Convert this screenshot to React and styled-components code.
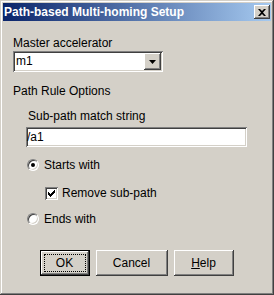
import React from 'react';
import styled, { createGlobalStyle, css } from 'styled-components';

const face = '#d4d0c8';
const shadow = '#808080';
const darkShadow = '#404040';

const GlobalStyle = createGlobalStyle`
  html, body {
    margin: 0;
    padding: 0;
    background: ${face};
  }
  * {
    box-sizing: border-box;
  }
`;

const sunken = css`
  box-shadow:
    inset 1px 1px ${shadow},
    inset -1px -1px #ffffff,
    inset 2px 2px ${darkShadow},
    inset -2px -2px ${face};
`;

const raised = css`
  box-shadow:
    inset -1px -1px ${darkShadow},
    inset 1px 1px #ffffff,
    inset -2px -2px ${shadow};
`;

const Window = styled.div`
  width: 274px;
  height: 295px;
  background: ${face};
  padding: 3px;
  display: flex;
  flex-direction: column;
  font-family: "Liberation Sans", Arial, sans-serif;
  font-size: 12px;
  color: #000000;
  box-shadow:
    inset -1px -1px ${darkShadow},
    inset 1px 1px ${face},
    inset -2px -2px ${shadow},
    inset 2px 2px #ffffff;
`;

const TitleBar = styled.div`
  height: 18px;
  display: flex;
  align-items: center;
  justify-content: space-between;
  padding: 0 1px 0 1px;
  background: linear-gradient(to right, #0a246a, #a6caf0);
`;

const TitleText = styled.span`
  color: #ffffff;
  font-weight: bold;
  font-size: 12px;
  line-height: 14px;
  white-space: nowrap;
`;

const CaptionButton = styled.div`
  width: 16px;
  height: 14px;
  background: ${face};
  display: flex;
  align-items: center;
  justify-content: center;
  ${raised};
`;

const Body = styled.div`
  display: flex;
  flex-direction: column;
  padding: 0 0 0 10px;
`;

const Label = styled.div`
  line-height: 14px;
  height: 14px;
  margin-top: ${p => p.$top || 0}px;
  padding-left: ${p => p.$indent || 0}px;
  white-space: nowrap;
`;

const Combo = styled.div`
  width: 150px;
  height: 21px;
  margin-top: 1px;
  background: #ffffff;
  padding: 2px;
  display: flex;
  align-items: center;
  ${sunken};
`;

const ComboValue = styled.span`
  flex: 1;
  padding-left: 1px;
  line-height: 17px;
`;

const ComboButton = styled.div`
  width: 17px;
  height: 17px;
  background: ${face};
  display: flex;
  align-items: center;
  justify-content: center;
  ${raised};
`;

const Indent = styled.div`
  display: flex;
  flex-direction: column;
  padding-left: ${p => p.$indent}px;
`;

const TextField = styled.div`
  width: 221px;
  height: 20px;
  margin-top: 4px;
  background: #ffffff;
  padding: 2px 1px;
  line-height: 16px;
  ${sunken};
`;

const OptionRow = styled.div`
  display: flex;
  align-items: center;
  height: 14px;
  margin-top: ${p => p.$top}px;
  padding-left: ${p => p.$indent || 0}px;
`;

const Radio = styled.span`
  width: 12px;
  height: 12px;
  border-radius: 50%;
  background: #ffffff;
  border: 1px solid;
  border-color: ${shadow} #ffffff #ffffff ${shadow};
  box-shadow: inset 1px 1px ${darkShadow}, inset -1px -1px ${face};
  display: flex;
  align-items: center;
  justify-content: center;
  margin-right: 5px;
  flex: none;

  &::after {
    content: '';
    width: 4px;
    height: 4px;
    border-radius: 50%;
    background: #000000;
    display: ${p => (p.$checked ? 'block' : 'none')};
  }
`;

const CheckBox = styled.span`
  width: 13px;
  height: 13px;
  background: #ffffff;
  display: flex;
  align-items: center;
  justify-content: center;
  margin-right: 4px;
  flex: none;
  ${sunken};
`;

const ButtonRow = styled.div`
  display: flex;
  justify-content: center;
  gap: 6px;
  margin-top: 24px;
  padding-right: 1px;
`;

const Button = styled.div`
  width: ${p => p.$width}px;
  height: 26px;
  background: ${face};
  display: flex;
  align-items: center;
  justify-content: center;
  position: relative;
  ${p => (p.$default
    ? css`
      box-shadow:
        inset 1px 1px #000000,
        inset -1px -1px #000000,
        inset -2px -2px ${darkShadow},
        inset 2px 2px #ffffff,
        inset -3px -3px ${shadow};
    `
    : raised)};
`;

const FocusRing = styled.span`
  position: absolute;
  inset: 4px;
  border: 1px dotted #000000;
`;

const Mnemonic = styled.span`
  text-decoration: underline;
`;

const CloseIcon = () => (
  <svg width="8" height="7" viewBox="0 0 8 7">
    <path d="M0 0h2l2 2 2-2h2L5 3.5 8 7H6L4 5 2 7H0l3-3.5z" fill="#000" />
  </svg>
);

const ArrowIcon = () => (
  <svg width="7" height="4" viewBox="0 0 7 4">
    <path d="M0 0h7L3.5 4z" fill="#000" />
  </svg>
);

const CheckIcon = () => (
  <svg width="9" height="9" viewBox="0 0 9 9" shapeRendering="crispEdges">
    <path d="M1 3h1v1h1v1h1V4h1V3h1V2h1V1h1v3H7v1H6v1H5v1H4v1H3V7H2V6H1z" fill="#000" />
  </svg>
);

export default function App() {
  return (
    <>
      <GlobalStyle />
      <Window>
        <TitleBar>
          <TitleText>Path-based Multi-homing Setup</TitleText>
          <CaptionButton>
            <CloseIcon />
          </CaptionButton>
        </TitleBar>
        <Body>
          <Label $top={15}>Master accelerator</Label>
          <Combo>
            <ComboValue>m1</ComboValue>
            <ComboButton>
              <ArrowIcon />
            </ComboButton>
          </Combo>
          <Label $top={12}>Path Rule Options</Label>
          <Indent $indent={13}>
            <Label $top={11} $indent={2}>Sub-path match string</Label>
            <TextField>/a1</TextField>
            <OptionRow $top={11} $indent={1}>
              <Radio $checked />
              Starts with
            </OptionRow>
            <OptionRow $top={14} $indent={19}>
              <CheckBox>
                <CheckIcon />
              </CheckBox>
              Remove sub-path
            </OptionRow>
            <OptionRow $top={12} $indent={1}>
              <Radio />
              Ends with
            </OptionRow>
          </Indent>
        </Body>
        <ButtonRow>
          <Button $width={50} $default>
            OK
            <FocusRing />
          </Button>
          <Button $width={72}>Cancel</Button>
          <Button $width={60}>
            <span><Mnemonic>H</Mnemonic>elp</span>
          </Button>
        </ButtonRow>
      </Window>
    </>
  );
}
